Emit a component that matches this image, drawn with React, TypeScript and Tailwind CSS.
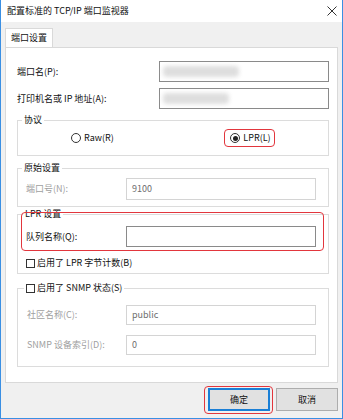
import React from 'react'

const font = { fontFamily: '"Noto Sans CJK SC", "Noto Sans", sans-serif' }

const Blurred = ({ width }: { width: string }) => (
  <div className={`h-[11px] ${width} bg-[#dedede] blur-[2px] rounded-sm`} />
)

const Radio = ({ checked }: { checked?: boolean }) => (
  <span className="w-[10px] h-[10px] rounded-full border border-[#333] bg-white flex items-center justify-center">
    {checked && <span className="w-[5px] h-[5px] rounded-full bg-[#222]" />}
  </span>
)

const Checkbox = () => <span className="w-[9px] h-[9px] border border-[#333] bg-white inline-block" />

const App: React.FC = () => {
  return (
    <div
      className="w-[343px] h-[419px] flex flex-col bg-[#f0f0f0] border-x border-b border-[#3a8fe3] text-[9px] text-[#111] leading-[12px]"
      style={font}
    >
      {/* Title bar */}
      <div className="h-[22px] bg-white flex items-center justify-between pl-[6px] pr-[5px] shrink-0">
        <span>配置标准的 TCP/IP 端口监视器</span>
        <svg width="10" height="10" viewBox="0 0 10 10">
          <path d="M0.5 0.5 L9.5 9.5 M9.5 0.5 L0.5 9.5" stroke="#333" strokeWidth="1" />
        </svg>
      </div>

      <div className="flex-1 flex flex-col px-[4px]">
        {/* Tab */}
        <div className="mt-[6px] flex">
          <div className="w-[48px] h-[19px] bg-white border border-b-0 border-[#d9d9d9] flex items-center pl-[5px]">
            端口设置
          </div>
        </div>

        {/* Panel */}
        <div className="h-[336px] bg-white border border-[#d9d9d9] pl-[11px] pr-[8px] pt-[13px] flex flex-col">
          <div className="flex items-center justify-between">
            <span>端口名(P):</span>
            <div className="w-[170px] h-[21px] border border-[#8a8a8a] flex items-center pl-[3px]">
              <Blurred width="w-[76px]" />
            </div>
          </div>
          <div className="flex items-center justify-between mt-[6px]">
            <span>打印机名或 IP 地址(A):</span>
            <div className="w-[170px] h-[21px] border border-[#8a8a8a] flex items-center pl-[3px]">
              <Blurred width="w-[66px]" />
            </div>
          </div>

          {/* 协议 */}
          <fieldset className="mt-[5px] border border-[#dcdcdc] pb-[10px]">
            <legend className="ml-[4px] px-[2px]">协议</legend>
            <div className="grid grid-cols-2 mt-[5px] h-[14px] items-center">
              <label className="flex items-center gap-[3px] justify-self-center mr-[6px]">
                <Radio />
                <span>Raw(R)</span>
              </label>
              <label className="relative flex items-center gap-[3px] justify-self-center">
                <Radio checked />
                <span>LPR(L)</span>
                <span className="absolute -left-[6px] -right-[4px] -top-[3px] -bottom-[3px] border-[1.5px] border-[#e2363d] rounded-[4px]" />
              </label>
            </div>
          </fieldset>

          {/* 原始设置 */}
          <fieldset className="mt-[6px] border border-[#dcdcdc] pl-[8px] pr-[12px] pb-[6px]">
            <legend className="ml-[-4px] px-[2px]">原始设置</legend>
            <div className="flex items-center justify-between mt-[4px]">
              <span className="text-[#a0a0a0]">端口号(N):</span>
              <div className="w-[190px] h-[22px] border border-[#d4d4d4] flex items-center pl-[5px] text-[#6d6d6d]">
                9100
              </div>
            </div>
          </fieldset>

          {/* LPR 设置 */}
          <fieldset className="relative mt-[1px] border border-[#dcdcdc] pl-[8px] pr-[12px] pb-[4px]">
            <legend className="ml-[-3px] px-[2px]">LPR 设置</legend>
            <div className="flex items-center justify-between mt-[6px]">
              <span>队列名称(Q):</span>
              <div className="w-[190px] h-[21px] border border-[#8a8a8a]" />
            </div>
            <label className="flex items-center gap-[2px] mt-[10px] h-[12px]">
              <Checkbox />
              <span>启用了 LPR 字节计数(B)</span>
            </label>
            <span className="absolute left-[3px] top-[-8px] w-[303px] h-[39px] border-[1.5px] border-[#e2363d] rounded-[4px]" />
          </fieldset>

          {/* SNMP */}
          <fieldset className="mt-[8px] border border-[#dcdcdc] pl-[9px] pr-[12px] pb-[11px]">
            <legend className="ml-[-3px] px-[2px]">
              <label className="flex items-center gap-[2px]">
                <Checkbox />
                <span>启用了 SNMP 状态(S)</span>
              </label>
            </legend>
            <div className="flex items-center justify-between mt-[11px]">
              <span className="text-[#a0a0a0]">社区名称(C):</span>
              <div className="w-[190px] h-[20px] border border-[#d4d4d4] flex items-center pl-[5px] text-[#6d6d6d]">
                public
              </div>
            </div>
            <div className="flex items-center justify-between mt-[10px]">
              <span className="text-[#a0a0a0]">SNMP 设备索引(D):</span>
              <div className="w-[190px] h-[20px] border border-[#d4d4d4] flex items-center pl-[5px] text-[#6d6d6d]">
                0
              </div>
            </div>
          </fieldset>
        </div>

        {/* Buttons */}
        <div className="flex justify-end gap-[6px] mt-[5px]">
          <div className="relative">
            <button className="w-[62px] h-[23px] bg-[#e1e1e1] border-2 border-[#1a7fd6] flex items-center justify-center">
              确定
            </button>
            <span className="absolute -left-[4px] -right-[3px] -top-[2px] -bottom-[3px] border-[1.5px] border-[#e2363d] rounded-[4px]" />
          </div>
          <button className="w-[62px] h-[23px] bg-[#e1e1e1] border border-[#adadad] flex items-center justify-center">
            取消
          </button>
        </div>
      </div>
    </div>
  )
}

export default App
